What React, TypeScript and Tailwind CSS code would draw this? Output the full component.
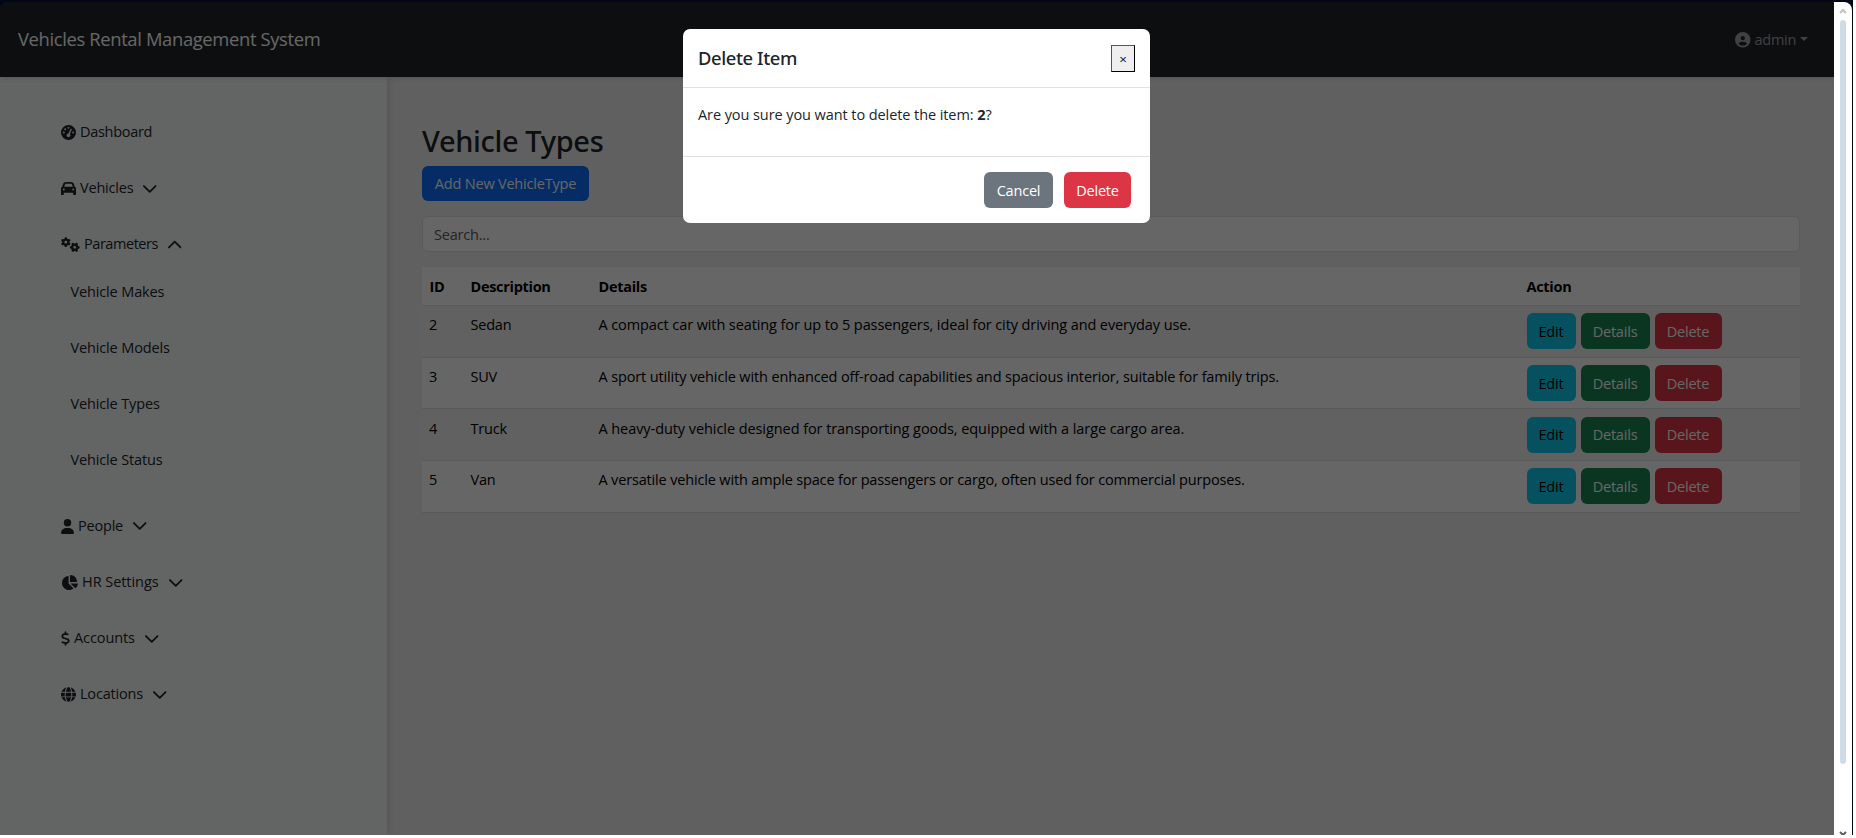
import React from "react";
import { FaGaugeHigh, FaCar, FaGears, FaUser, FaChartPie, FaDollarSign, FaGlobe, FaCircleUser } from "react-icons/fa6";

type Tone = "info" | "success" | "danger" | "primary" | "secondary";

const tones: Record<Tone, string> = {
  info: "bg-[#0dcaf0] text-black",
  success: "bg-[#198754] text-white",
  danger: "bg-[#dc3545] text-white",
  primary: "bg-[#0d6efd] text-white",
  secondary: "bg-[#6c757d] text-white",
};

function Button({ tone, size, children }: { tone: Tone; size: string; children: React.ReactNode }) {
  return (
    <button className={`flex shrink-0 items-center justify-center whitespace-nowrap rounded-[6px] pt-[2px] ${tones[tone]} ${size}`}>
      {children}
    </button>
  );
}

function Chevron({ up = false }: { up?: boolean }) {
  return (
    <svg viewBox="0 0 14 14" className={`ml-[10px] h-[13.5px] w-[13.5px] ${up ? "rotate-180" : ""}`} fill="none" stroke="currentColor" strokeWidth="1.9" strokeLinecap="round" strokeLinejoin="round">
      <path d="M1 4.2 7 10.2 13 4.2" />
    </svg>
  );
}

function NavItem({ icon, label, width, arrow }: { icon: React.ReactNode; label: string; width: string; arrow?: "up" | "down" }) {
  return (
    <li className="flex h-[56.2px] items-center pl-[61px]">
      {icon}
      <span className={`ml-1 whitespace-nowrap ${width}`}>{label}</span>
      {arrow && <Chevron up={arrow === "up"} />}
    </li>
  );
}

const subItems = ["Vehicle Makes", "Vehicle Models", "Vehicle Types", "Vehicle Status"];

const rows = [
  { id: 2, name: "Sedan", spacing: "tracking-[-0.1px]", details: "A compact car with seating for up to 5 passengers, ideal for city driving and everyday use." },
  { id: 3, name: "SUV", spacing: "tracking-[-0.13px]", details: "A sport utility vehicle with enhanced off-road capabilities and spacious interior, suitable for family trips." },
  { id: 4, name: "Truck", spacing: "tracking-[-0.07px]", details: "A heavy-duty vehicle designed for transporting goods, equipped with a large cargo area." },
  { id: 5, name: "Van", spacing: "tracking-[-0.16px]", details: "A versatile vehicle with ample space for passengers or cargo, often used for commercial purposes." },
];

const columns = "grid grid-cols-[41px_128px_928px_1fr]";

function Sidebar() {
  return (
    <nav className="z-10 w-[387px] shrink-0 bg-[#f8fbf9] pt-[27px] shadow-[1px_0_8px_rgba(0,0,0,0.15)]">
      <ul>
        <NavItem icon={<FaGaugeHigh className="h-[15px] w-[15px]" />} label="Dashboard" width="w-[72px] tracking-[-0.3px]" />
        <NavItem icon={<FaCar className="h-[15px] w-[15px]" />} label="Vehicles" width="w-[53px]" arrow="down" />
        <NavItem icon={<FaGears className="h-[15px] w-[19px]" />} label="Parameters" width="w-[74px] tracking-[-0.45px]" arrow="up" />
      </ul>
      <ul className="-mt-[8.6px] mb-[10px] pl-[70.5px] tracking-[-0.14px]">
        {subItems.map((item) => (
          <li key={item} className="flex h-14 items-center">{item}</li>
        ))}
      </ul>
      <ul>
        <NavItem icon={<FaUser className="h-[15px] w-[13px]" />} label="People" width="w-[45px]" arrow="down" />
        <NavItem icon={<FaChartPie className="h-[15px] w-[17px]" />} label="HR Settings" width="w-[77px] tracking-[-0.05px]" arrow="down" />
        <NavItem icon={<FaDollarSign className="h-[15px] w-[9px]" />} label="Accounts" width="w-[61px] tracking-[-0.1px]" arrow="down" />
        <NavItem icon={<FaGlobe className="h-[15px] w-[15px]" />} label="Locations" width="w-[63px]" arrow="down" />
      </ul>
    </nav>
  );
}

function TypesTable() {
  return (
    <div className="mt-[15px] text-black">
      <div className={`${columns} h-[39px] items-center border-b border-[#dee2e6] bg-white pt-[2px] font-bold tracking-[-0.3px]`}>
        {["ID", "Description", "Details", "Action"].map((h) => (
          <div key={h} className="px-[7.5px]">{h}</div>
        ))}
      </div>
      {rows.map((row, i) => (
        <div key={row.id} className={`${columns} h-[51.7px] border-b border-[#dee2e6] pt-[7.2px] ${i % 2 === 0 ? "bg-[#f2f2f2]" : "bg-white"}`}>
          <div className="px-[7px] pt-px">{row.id}</div>
          <div className="px-[7.5px] pt-px">{row.name}</div>
          <div className={`whitespace-nowrap px-[7.5px] pt-px ${row.spacing}`}>{row.details}</div>
          <div className="flex gap-[5px] px-[7.5px]">
            <Button tone="info" size="h-9 w-[49px]">Edit</Button>
            <Button tone="success" size="h-9 w-[69px]">Details</Button>
            <Button tone="danger" size="h-9 w-[67px]">Delete</Button>
          </div>
        </div>
      ))}
    </div>
  );
}

function DeleteDialog() {
  return (
    <div role="dialog" className="absolute left-[683px] top-[29px] z-40 h-[194px] w-[467px] rounded-[7px] bg-white">
      <div className="flex h-[59px] items-center justify-between border-b border-[#dee2e6] pl-[15px] pr-[15px]">
        <h5 className="font-['Noto_Sans',sans-serif] text-[18.4px] font-medium tracking-[-0.4px]">Delete Item</h5>
        <button className="flex h-[27px] w-6 items-center justify-center border border-b-black border-l-[#555] border-r-black border-t-[#555] bg-[#efefef] pt-[2px] text-[13.5px] text-black">×</button>
      </div>
      <div className="h-[69px] border-b border-[#dee2e6] pl-[15px] pt-4 tracking-[-0.08px]">
        Are you sure you want to delete the item: <b>2</b>?
      </div>
      <div className="flex justify-end gap-[11px] pr-[19px] pt-[15px]">
        <Button tone="secondary" size="h-9 w-[69px]">Cancel</Button>
        <Button tone="danger" size="h-9 w-[67px]">Delete</Button>
      </div>
    </div>
  );
}

function ScrollBar() {
  return (
    <div className="mr-px flex w-[18px] flex-col items-center overflow-hidden rounded-tr-[8px] bg-white">
      <svg viewBox="0 0 8 6" className="mt-[6px] h-[6px] w-2 shrink-0" fill="none" stroke="#c0c0c0" strokeWidth="2">
        <path d="M1 5 4 2 7 5" />
      </svg>
      <div className="mt-[6px] h-[744px] w-[6px] shrink-0 rounded-full bg-[#d0dce5]" />
      <svg viewBox="0 0 8 6" className="mt-[67px] h-[6px] w-2 shrink-0" fill="none" stroke="#606060" strokeWidth="2">
        <path d="M1 1 4 4 7 1" />
      </svg>
    </div>
  );
}

export default function App() {
  return (
    <div className="relative flex h-[838px] w-[1856px] flex-col overflow-hidden bg-white font-['Open_Sans','Noto_Sans',sans-serif] text-[14.5px] leading-[22.4px] tracking-[-0.2px] text-[#212529]">
      <div className="flex h-[835px] w-[1853px] bg-[#020617] pt-[2px]">
        <div className="relative flex w-[1834px] shrink-0 flex-col overflow-hidden rounded-tl-[8px]">
          <header className="z-20 flex h-[75px] shrink-0 items-center justify-between bg-[#212529] pl-[18px] pr-[26px] shadow-[0_1px_5px_rgba(0,0,0,0.15)]">
            <span className="text-[18.4px] tracking-[-0.36px] text-white">Vehicles Rental Management System</span>
            <span className="flex items-center pt-px tracking-[-0.3px] text-[#a0a2a4]">
              <FaCircleUser className="mr-1 h-[15.5px] w-[15.5px]" />
              admin
              <svg viewBox="0 0 8 4" className="mb-[2px] ml-1 h-1 w-2" fill="currentColor">
                <path d="M0 0H8L4 4Z" />
              </svg>
            </span>
          </header>
          <div className="flex flex-1">
            <Sidebar />
            <main className="flex-1 bg-[#f1f1f1] pl-[35px] pr-[34px] pt-[46px]">
              <h2 className="font-['Noto_Sans',sans-serif] text-[29px] font-medium leading-9 tracking-[-0.35px]">Vehicle Types</h2>
              <div className="mt-[7px]">
                <Button tone="primary" size="h-[35px] w-[167px]">Add New VehicleType</Button>
              </div>
              <div className="mt-[15px] flex h-9 items-center rounded-[6px] border border-[#dee2e6] bg-white px-[11px] pt-[2px] text-[#595c5f]">Search...</div>
              <TypesTable />
            </main>
          </div>
          <div className="absolute inset-0 z-30 bg-black/60" />
        </div>
        <ScrollBar />
      </div>
      <DeleteDialog />
    </div>
  );
}
